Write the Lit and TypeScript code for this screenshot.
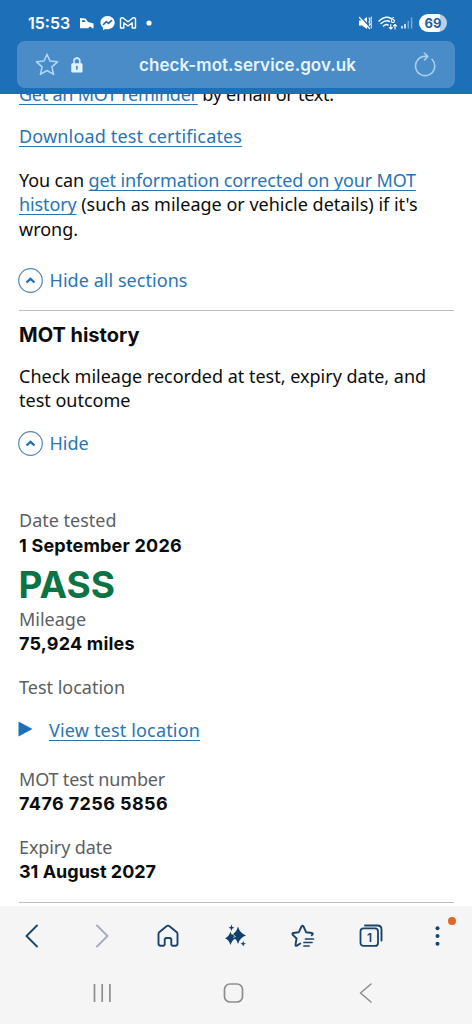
import { LitElement, html, css, svg } from "lit";
import { customElement } from "lit/decorators.js";

@customElement("app-root")
export class AppRoot extends LitElement {
  static styles = css`
    :host { display: flex; flex-direction: column; width: 100%; height: 1024px; overflow: hidden; background: #fff; color: #0b0c0c; font-family: "Noto Sans", "Open Sans", sans-serif; }
    * { box-sizing: border-box; }
    svg { display: block; flex: none; fill: none; stroke-linecap: round; stroke-linejoin: round; }
    header { flex: none; height: 94px; background: #1d70b8; color: #fff; padding: 0 17px; z-index: 1; font-family: Inter, sans-serif; }
    .status { display: flex; align-items: center; height: 41px; padding: 4px 8px 0 11px; font-size: 16px; font-weight: 600; }
    .status .apps { margin-left: 9px; }
    .status .right { margin-left: auto; }
    .battery { width: 28px; height: 18px; margin-left: 5px; border-radius: 9px; background: linear-gradient(90deg, #fff 76%, #b5d0e9 76%); color: #1d62a3; font-size: 13px; line-height: 18px; text-align: center; font-weight: 700; }
    .address { display: flex; align-items: center; height: 47px; border-radius: 8px; background: #4a8cc7; padding: 0 18px 0 17px; }
    .address .url { flex: 1; text-align: center; font-size: 17px; font-weight: 600; line-height: 24px; color: #e6f4ff; padding-right: 2px; letter-spacing: 0.05px; }
    .address .lock { margin-left: 10px; }
    main { flex: 1; min-height: 0; overflow: hidden; padding: 0 19px; font-size: 18px; line-height: 24.5px; white-space: nowrap; }
    p, h2, hr { margin: 0; }
    a, .button { color: #2b74b4; }
    a { text-decoration: underline; text-decoration-thickness: 1.4px; text-underline-offset: 3px; text-decoration-skip-ink: none; }
    hr { border: 0; height: 1px; background: #bcbec0; margin-right: -1px; }
    b, h2, .pass { font-family: Inter, sans-serif; font-weight: 700; }
    b { display: block; margin-top: 1px; letter-spacing: 0.2px; }
    .label { color: #5b5f63; }
    .reminder { margin-top: -12.5px; letter-spacing: -0.24px; }
    .download { margin-top: 18px; letter-spacing: 0.16px; }
    .correct { margin-top: 19px; }
    .correct .info { letter-spacing: -0.14px; }
    .correct .lead { letter-spacing: -0.12px; }
    .button { display: flex; align-items: center; gap: 6.5px; margin-left: -1px; }
    .all { margin-top: 27px; letter-spacing: 0.05px; }
    .rule-top { margin-top: 17px; }
    h2 { font-size: 20px; line-height: 25px; margin-top: 12px; }
    .summary { margin-top: 15.5px; }
    .one { margin-top: 18px; }
    .tested { margin-top: 52.5px; }
    .pass { color: #0b7344; font-size: 37px; line-height: 45px; margin: 3.5px 0 0 -0.5px; }
    .location { margin-top: 18px; }
    .view { display: flex; align-items: center; gap: 16px; margin: 18.5px 0 0 -1px; letter-spacing: 0.17px; }
    .number { margin-top: 24.5px; letter-spacing: -0.18px; }
    .digits { letter-spacing: 0.4px; }
    .expiry { margin-top: 18px; letter-spacing: -0.1px; }
    .until { letter-spacing: 0; }
    .rule-end { margin-top: 17.5px; }
    footer { flex: none; height: 118px; background: #f5f5f5; color: #1b4469; }
    .tools { display: grid; grid-template-columns: repeat(7, 67.5px); justify-content: center; height: 60px; align-items: center; justify-items: center; padding-right: 1px; }
    .keys { display: grid; grid-template-columns: repeat(3, 132px); justify-content: center; justify-items: center; align-items: center; height: 54px; padding-right: 4px; }
  `;

  private chevron() {
    return svg`<svg width="25" height="25" viewBox="0 0 25 25"><circle cx="12.5" cy="12.5" r="11.8" stroke="#5286b5" stroke-width="1.2"/><path d="M8.5 14.5 12.5 10.8 16.5 14.5" stroke="#1d70b8" stroke-width="2.3" stroke-linecap="butt" stroke-linejoin="miter"/></svg>`;
  }

  render() {
    return html`
      <header>
        <div class="status">
          <span>15:53</span>
          <svg class="apps" width="74" height="18" viewBox="0 0 74 18">
            <path d="M1 4 6.500 4.500 9 8 14.500 9.500V14.200H12.900A1.800 1.800 0 0 0 9.400 14.200H1Z" fill="#fff"/>
            <path d="M3 6.200H5.600L7 8H3Z" fill="#1d70b8"/>
            <path d="M28.5 2C24.3 2 21.5 5 21.5 8.6 21.5 10.8 22.5 12.5 24 13.700V16.200L26.400 15C32 16.200 35.700 12.800 35.700 8.600 35.700 5 32.700 2 28.500 2Z" fill="#fff"/>
            <path d="M24.500 10.500 27.300 7.600 29.500 9.300 32.500 6.600" stroke="#1d70b8" stroke-width="1.600"/>
            <path d="M41.500 4.800V14H44.800V8.800L49 12 53.200 8.800V14H56.500V4.800Q55.500 3 53.500 4.200L49 7.800 44.500 4.200Q42.500 3 41.500 4.800Z" stroke="#fff" stroke-width="1.400"/>
            <circle cx="70" cy="9" r="2.600" fill="#fff"/>
          </svg>
          <svg class="right" width="56" height="18" viewBox="0 0 56 18">
            <path d="M1 6.500H4L9 3V15L4 11.500H1Z" fill="#fff"/>
            <path d="M2.500 2.500 12.500 13.500" stroke="#1d70b8" stroke-width="1.400"/>
            <path d="M1.500 3.500 11.500 14.500" stroke="#fff" stroke-width="1.200"/>
            <path d="M11 4 12 6 11 8 12 10 11 12M13.200 3V14" stroke="#fff" stroke-width="1.100" stroke-dasharray="2 1.200"/>
            <path d="M21 7Q27.500 1 33 4.500M23 9.500Q28 5.500 31.500 7.500M25.500 12Q28 9.800 30 11" stroke="#fff" stroke-width="1.500"/>
            <path d="M35.500 3.500Q33.500 4 33.500 6.500A1.500 1.500 0 1 0 35 5.500" stroke="#fff" stroke-width="1.200"/>
            <path d="M32.800 10.500V15M31.300 13.500 32.800 15 34.300 13.500M37 15V10.500M35.500 12 37 10.500 38.500 12" stroke="#fff" stroke-width="1.100"/>
            <path d="M44 12.500V14M47 10.500V14" stroke="#fff" stroke-width="1.500"/>
            <path d="M50.300 7.500V14M53.600 4V14" stroke="#79aad6" stroke-width="1.500"/>
          </svg>
          <span class="battery">69</span>
        </div>
        <div class="address">
          <svg width="26" height="26" viewBox="0 0 26 26"><path d="M13 2.200 16 9 23.500 9.800 17.900 14.800 19.600 22.400 13 18.500 6.400 22.400 8.100 14.800 2.500 9.800 10 9Z" stroke="#aed6f8" stroke-width="1.600"/></svg>
          <svg class="lock" width="14" height="18" viewBox="0 0 14 18"><path d="M4 8V5A2.900 2.900 0 0 1 9.800 5V8" stroke="#d8edfc" stroke-width="1.600"/><rect x="1.300" y="7.200" width="11.200" height="9.300" rx="1.300" fill="#e1f2ff"/><path d="M6.900 10.500V13" stroke="#3b79b2" stroke-width="1.500"/></svg>
          <span class="url">check-mot.service.gov.uk</span>
          <svg class="reload" width="24" height="26" viewBox="0 0 24 26"><path d="M19 7.300A9.600 9.600 0 1 1 12 4.400H14.500M11.300 1 14.800 4.400 11.500 8" stroke="#a9cdec" stroke-width="1.600"/></svg>
        </div>
      </header>
      <main>
        <p class="reminder"><a>Get an MOT reminder</a> by email or text.</p>
        <p class="download"><a>Download test certificates</a></p>
        <p class="correct"><span class="lead">You can </span><a class="info">get information corrected on your MOT</a><br /><a class="lead">history</a><span class="lead"> </span>(such as mileage or vehicle details) if it's<br />wrong.</p>
        <div class="button all">${this.chevron()}<span>Hide all sections</span></div>
        <hr class="rule-top" />
        <h2>MOT history</h2>
        <p class="summary">Check mileage recorded at test, expiry date, and<br />test outcome</p>
        <div class="button one">${this.chevron()}<span>Hide</span></div>
        <p class="label tested">Date tested</p>
        <b>1 September 2026</b>
        <div class="pass">PASS</div>
        <p class="label">Mileage</p>
        <b>75,924 miles</b>
        <p class="label location">Test location</p>
        <div class="view"><svg width="15" height="17" viewBox="0 0 15 17"><path d="M.5 .5 14.500 8 .5 15.500Z" fill="#1d70b8"/></svg><a>View test location</a></div>
        <p class="label number">MOT test number</p>
        <b class="digits">7476 7256 5856</b>
        <p class="label expiry">Expiry date</p>
        <b class="until">31 August 2027</b>
        <hr class="rule-end" />
      </main>
      <footer>
        <div class="tools">
          <svg width="26" height="26" viewBox="0 0 26 26"><path d="M17 2.500 6.500 13 17 23.500" stroke="currentColor" stroke-width="1.900"/></svg>
          <svg width="26" height="26" viewBox="0 0 26 26"><path d="M9 2.500 19.500 13 9 23.500" stroke="#a5adbc" stroke-width="1.900"/></svg>
          <svg width="26" height="26" viewBox="0 0 26 26"><path d="M3.500 10.700Q3.500 9.800 4.200 9.200L11.800 3.100Q13 2.200 14.200 3.100L21.800 9.200Q22.500 9.800 22.500 10.700V20.500Q22.500 22.700 20.300 22.700H17.500Q16.300 22.700 16.300 21.500V17Q16.300 15 14.500 15H11.500Q9.700 15 9.700 17V21.500Q9.700 22.700 8.500 22.700H5.700Q3.500 22.700 3.500 20.500Z" stroke="currentColor" stroke-width="1.900"/></svg>
          <svg width="26" height="26" viewBox="0 0 26 26"><g fill="#123f6b"><path d="M15 3.500Q16.800 10.300 23 12.500 16.800 14.500 15 21 13.200 14.500 7.500 12.500 13.200 10.300 15 3.500Z"/><path d="M7.500 8.500Q9 13.800 13 15.200 9 16.800 7.500 22 6 16.800 2 15.200 6 13.800 7.500 8.500Z"/><path d="M8.500 1.500 9.400 4 11.500 4.800 9.400 5.600 8.500 8 7.600 5.600 5.500 4.800 7.600 4ZM20.200 18 21 20 23 20.800 21 21.600 20.200 23.600 19.400 21.600 17.400 20.800 19.400 20Z"/></g><path d="M8.500 10 12.500 13.500 10.500 14.300" stroke="#f5f5f5" stroke-width=".7"/></svg>
          <svg width="26" height="26" viewBox="0 0 26 26"><path d="M10.300 20.500 6.900 22.600Q5.300 23.200 5.500 21.600L6.600 15.500 2.700 11.700Q1.800 10.500 3.300 10L8.900 9.200 11.500 3.500Q12.500 2 13.500 3.500L16.100 9.200 22 10Q23.400 10.600 22.300 11.700L21.700 12.300" stroke="currentColor" stroke-width="1.900"/><path d="M15.500 16H23.500M14 19.500H22M14 23H19" stroke="currentColor" stroke-width="1.700"/></svg>
          <svg width="26" height="26" viewBox="0 0 26 26"><rect x="2.500" y="5.400" width="17.500" height="17.500" rx="3" stroke="currentColor" stroke-width="1.800"/><path d="M7 2.500H19.500Q23.500 2.500 23.500 6.500V17.500" stroke="currentColor" stroke-width="1.900"/><text x="11.500" y="18.500" font-size="12" font-family="Inter, sans-serif" font-weight="600" text-anchor="middle" fill="currentColor">1</text></svg>
          <svg width="40" height="40" viewBox="0 0 40 40"><g fill="#1b4469"><circle cx="19.500" cy="12.300" r="2"/><circle cx="19.500" cy="20" r="2"/><circle cx="19.500" cy="27.700" r="2"/></g><circle cx="34" cy="5" r="4" fill="#e06527"/></svg>
        </div>
        <div class="keys">
          <svg width="22" height="22" viewBox="0 0 22 22"><path d="M3.500 2V20M11.200 2V20M18.900 2V20" stroke="#8e8e8e" stroke-width="1.700" stroke-linecap="butt"/></svg>
          <svg width="22" height="22" viewBox="0 0 22 22"><rect x="1.500" y="2" width="18" height="18" rx="5.500" stroke="#8e8e8e" stroke-width="1.700"/></svg>
          <svg width="22" height="22" viewBox="0 0 22 22"><path d="M16 2 5.500 11 16 20" stroke="#8e8e8e" stroke-width="1.600"/></svg>
        </div>
      </footer>`;
  }
}
